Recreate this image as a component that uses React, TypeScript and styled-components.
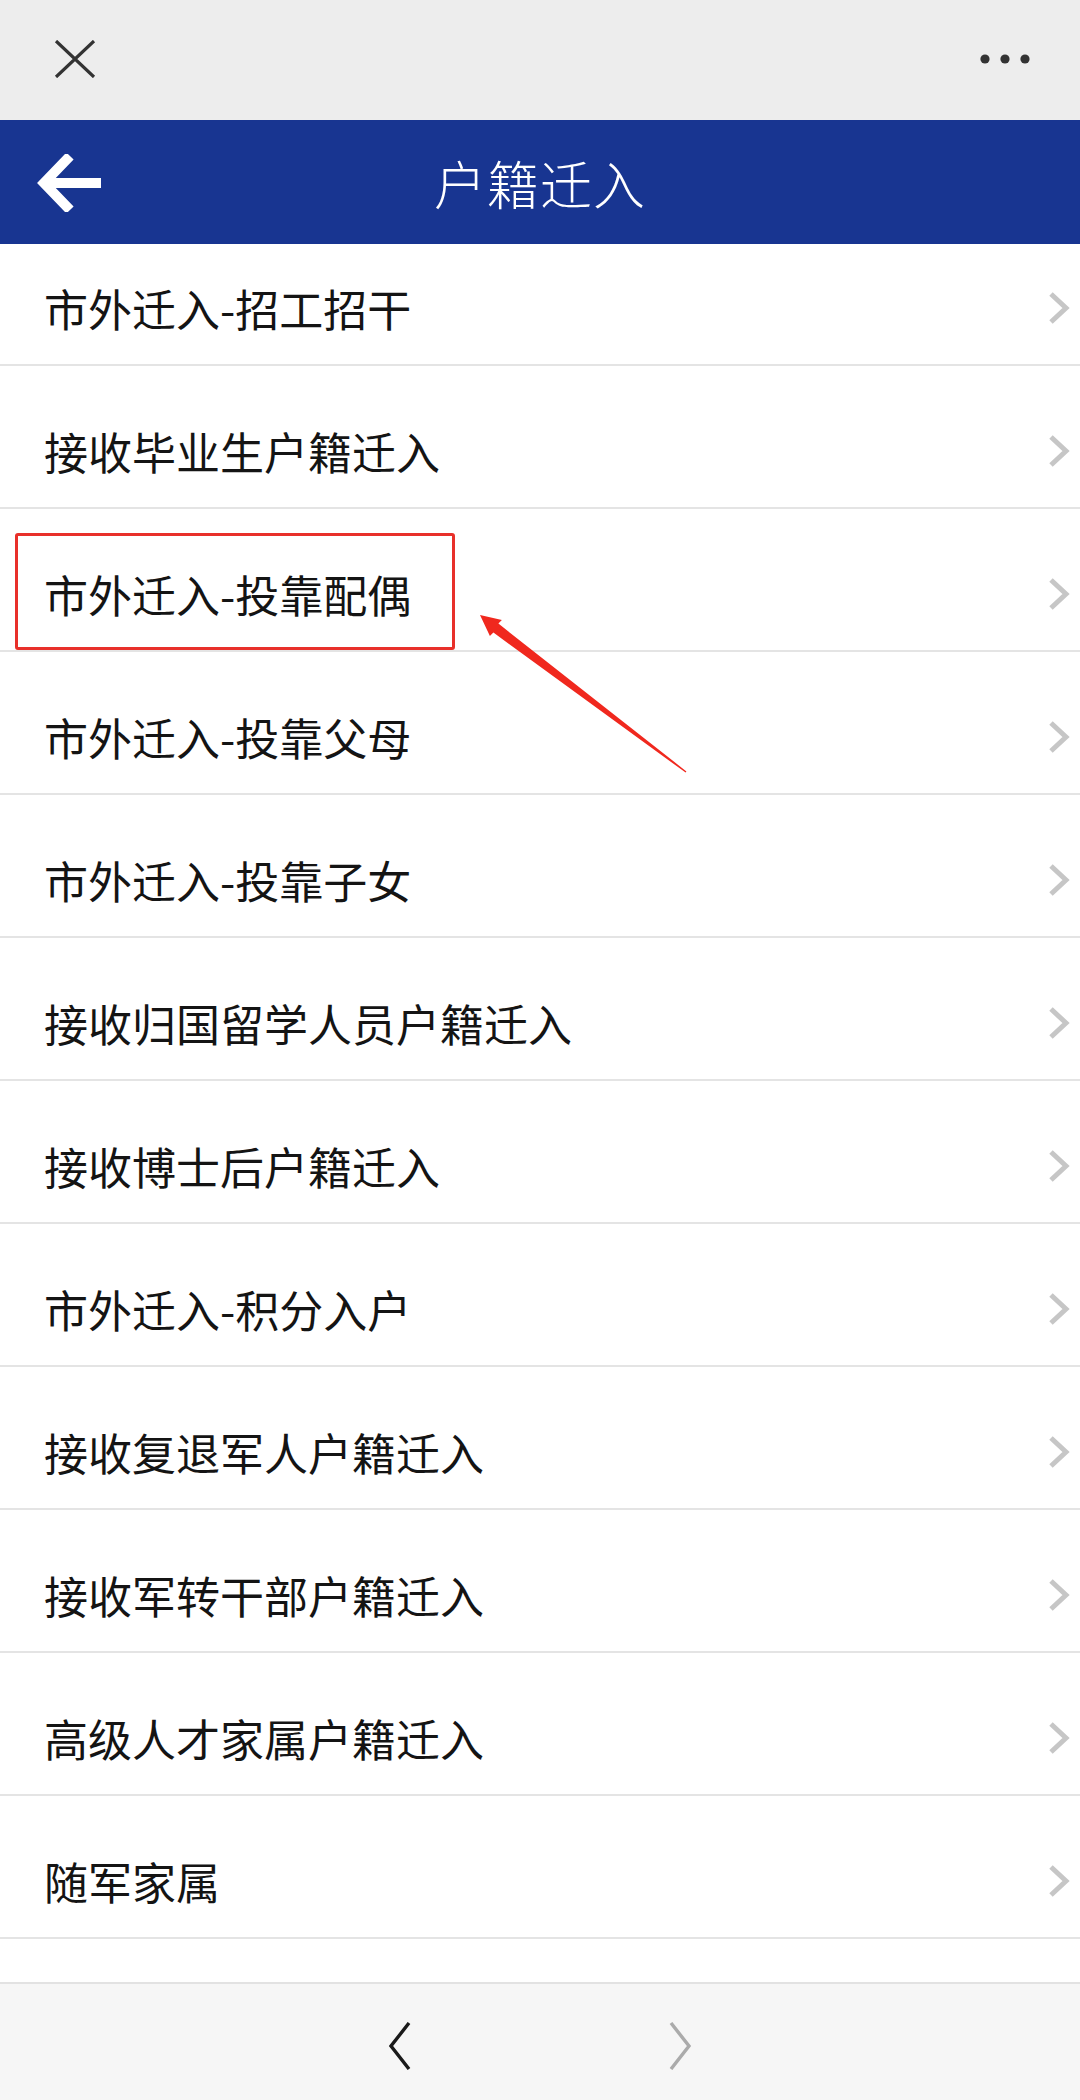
import React from "react";
import styled, { createGlobalStyle } from "styled-components";

const GlobalStyle = createGlobalStyle`
  html, body { margin: 0; padding: 0; background: #ffffff; }
  #root { width: 1080px; height: 2100px; }
  * { box-sizing: border-box; }
`;

const Page = styled.div`
  position: relative;
  width: 1080px;
  height: 2100px;
  display: flex;
  flex-direction: column;
  overflow: hidden;
  font-family: "Noto Sans CJK SC", "Noto Sans", sans-serif;
  background: #ffffff;
`;

const TopBar = styled.div`
  height: 120px;
  flex: none;
  background: #ededed;
  display: flex;
  align-items: center;
  justify-content: space-between;
  padding: 0 50px 2px 54px;
`;

const Header = styled.header`
  height: 124px;
  flex: none;
  background: #183591;
  display: grid;
  grid-template-columns: 160px 1fr 160px;
  align-items: center;
`;

const BackButton = styled.div`
  display: flex;
  align-items: center;
  padding-left: 37px;
  padding-top: 2px;
`;

const Title = styled.h1`
  margin: 0;
  text-align: center;
  color: #ffffff;
  font-size: 52px;
  font-weight: 300;
  line-height: 1;
  letter-spacing: 1px;
  padding-top: 2px;
`;

const Viewport = styled.div`
  flex: 1;
  overflow: hidden;
  background: #ffffff;
`;

const List = styled.ul`
  list-style: none;
  margin: -21px 0 0 0;
  padding: 0;
`;

const Row = styled.li`
  height: 143px;
  border-bottom: 2px solid #e4e4e4;
  display: flex;
  align-items: center;
  justify-content: space-between;
  padding: 28px 10px 0 44px;
`;

const RowLabel = styled.span`
  font-size: 44px;
  color: #141414;
  line-height: 1;
`;

const BottomBar = styled.nav`
  height: 118px;
  flex: none;
  background: #f6f6f6;
  border-top: 2px solid #e2e2e2;
  display: flex;
  align-items: center;
  justify-content: center;
  gap: 254px;
  padding-top: 8px;
`;

const Highlight = styled.div`
  position: absolute;
  left: 15px;
  top: 533px;
  width: 440px;
  height: 117px;
  border: 3px solid #e8302a;
  border-radius: 3px;
  pointer-events: none;
`;

const ArrowLayer = styled.svg`
  position: absolute;
  left: 0;
  top: 0;
  pointer-events: none;
`;

const items = [
  "市外迁入-招工招干",
  "接收毕业生户籍迁入",
  "市外迁入-投靠配偶",
  "市外迁入-投靠父母",
  "市外迁入-投靠子女",
  "接收归国留学人员户籍迁入",
  "接收博士后户籍迁入",
  "市外迁入-积分入户",
  "接收复退军人户籍迁入",
  "接收军转干部户籍迁入",
  "高级人才家属户籍迁入",
  "随军家属",
];

const CloseIcon = () => (
  <svg width="42" height="38" viewBox="0 0 42 38">
    <path d="M2 1 L40 37 M40 1 L2 37" stroke="#333" strokeWidth="3.2" fill="none" />
  </svg>
);

const MoreIcon = () => (
  <svg width="50" height="12" viewBox="0 0 50 12">
    <circle cx="5" cy="6" r="4.6" fill="#333" />
    <circle cx="25" cy="6" r="4.6" fill="#333" />
    <circle cx="45" cy="6" r="4.6" fill="#333" />
  </svg>
);

const BackIcon = () => (
  <svg width="66" height="58" viewBox="0 0 66 58">
    <path d="M64 29 H10" stroke="#fff" strokeWidth="10" fill="none" />
    <path d="M33 2 L7 29 L33 56" stroke="#fff" strokeWidth="10" fill="none" strokeLinejoin="miter" />
  </svg>
);

const RowChevron = () => (
  <svg width="22" height="32" viewBox="0 0 22 32">
    <path d="M3 2 L18 16 L3 30" stroke="#c6c6c6" strokeWidth="5" fill="none" />
  </svg>
);

const NavChevron = ({ dir, color }: { dir: "left" | "right"; color: string }) => (
  <svg width="26" height="48" viewBox="0 0 26 48">
    {dir === "left" ? (
      <path d="M22 1 L4 24 L22 47" stroke={color} strokeWidth="3.4" fill="none" />
    ) : (
      <path d="M4 1 L22 24 L4 47" stroke={color} strokeWidth="3.4" fill="none" />
    )}
  </svg>
);

export default function App() {
  return (
    <>
      <GlobalStyle />
      <Page>
        <TopBar>
          <CloseIcon />
          <MoreIcon />
        </TopBar>
        <Header>
          <BackButton>
            <BackIcon />
          </BackButton>
          <Title>户籍迁入</Title>
          <div />
        </Header>
        <Viewport>
          <List>
            {items.map((t) => (
              <Row key={t}>
                <RowLabel>{t}</RowLabel>
                <RowChevron />
              </Row>
            ))}
          </List>
        </Viewport>
        <BottomBar>
          <NavChevron dir="left" color="#1a1a1a" />
          <NavChevron dir="right" color="#ababab" />
        </BottomBar>
        <Highlight />
        <ArrowLayer width="1080" height="2100" viewBox="0 0 1080 2100">
          <polygon
            points="480,615 489.9,636.1 493.4,632.6 685.6,772.6 686.4,771.4 498.4,623.6 501.9,620.1"
            fill="#f0281e"
          />
        </ArrowLayer>
      </Page>
    </>
  );
}
